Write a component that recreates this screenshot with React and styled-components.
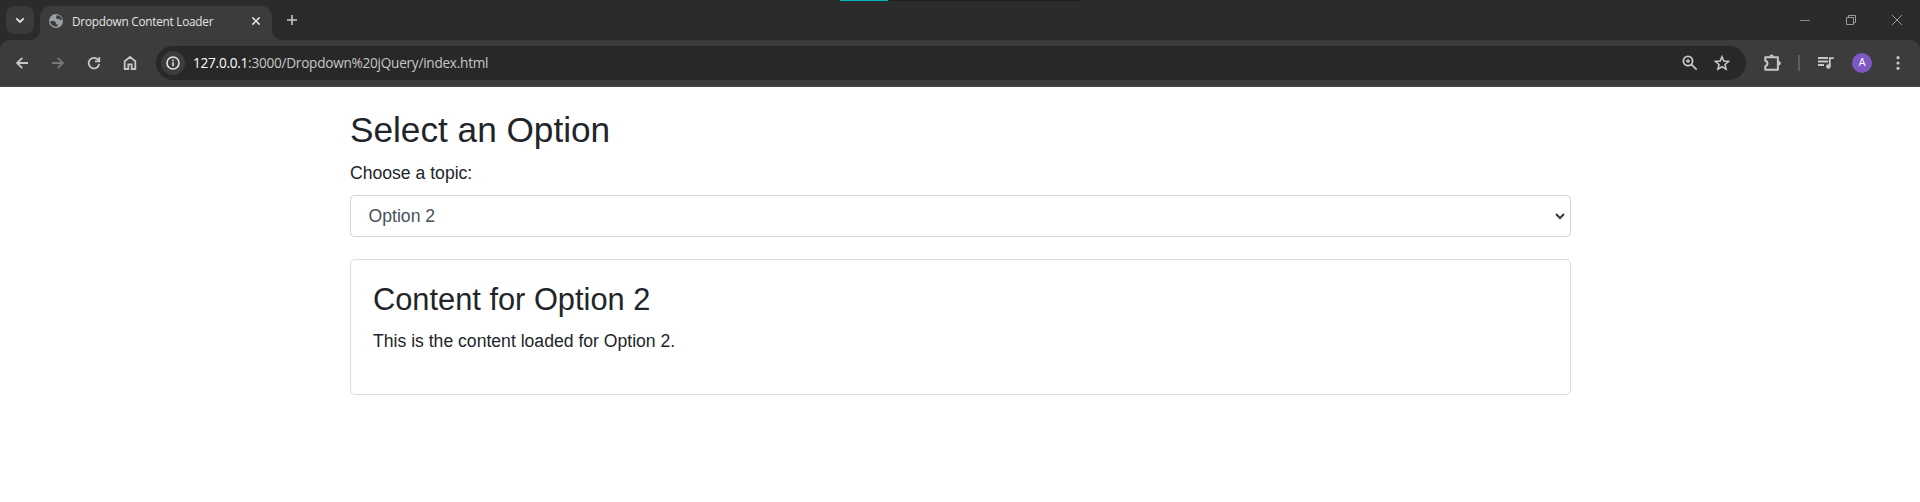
import React from "react";
import styled, { createGlobalStyle } from "styled-components";

const GlobalStyle = createGlobalStyle`
  *, *::before, *::after { box-sizing: border-box; }
  body {
    margin: 0;
    background: #fff;
    color: #212529;
    font-family: Arial, "Liberation Sans", sans-serif;
    font-size: 17.6px;
    line-height: 1.5;
  }
`;

const Browser = styled.header`
  height: 87px;
  background: #2b2b2b;
  font-family: "Segoe UI", "Open Sans", sans-serif;
`;

const LoadingTrack = styled.div`
  position: absolute;
  top: 0;
  left: 840px;
  width: 241px;
  height: 1px;
  background: #1e1e1e;
`;

const LoadingBar = styled.div`
  width: 48px;
  height: 1px;
  background: #00b7c3;
`;

const TabStrip = styled.div`
  display: flex;
  align-items: flex-start;
  height: 40px;
  padding: 6px 0 0 6px;
`;

const TabSearch = styled.div`
  display: flex;
  width: 28px;
  height: 28px;
  border-radius: 9px;
  background: #3a3c3b;
`;

const Tab = styled.div`
  position: relative;
  display: flex;
  align-items: center;
  width: 232px;
  height: 34px;
  margin-left: 6px;
  padding: 0 6px 5px 8px;
  border-radius: 10px 10px 0 0;
  background: #3c3c3c;

  &::before, &::after {
    content: "";
    position: absolute;
    bottom: 0;
    width: 10px;
    height: 10px;
  }
  &::before {
    left: -10px;
    background: radial-gradient(circle at 0 0, transparent 9.5px, #3c3c3c 10.5px);
  }
  &::after {
    right: -10px;
    background: radial-gradient(circle at 100% 0, transparent 9.5px, #3c3c3c 10.5px);
  }
`;

const TabTitle = styled.span`
  flex: 1;
  margin-left: 8px;
  color: #e3e3e3;
  font-size: 11.8px;
  line-height: 16px;
  letter-spacing: -0.25px;
  white-space: nowrap;
`;

const NewTab = styled.div`
  display: flex;
  margin-left: 6px;
`;

const WindowControls = styled.div`
  display: flex;
  margin-left: auto;
`;

const ControlCell = styled.div`
  display: flex;
  width: 46px;
  height: 28px;
`;

const Toolbar = styled.div`
  display: flex;
  align-items: center;
  height: 47px;
  padding: 0 4px;
  border-radius: 9px 9px 0 0;
  border-bottom: 1px solid #4a4a4a;
  background: #3c3c3c;
`;

const ToolButton = styled.div`
  display: flex;
  flex: none;
  width: ${(p) => p.$width || 36}px;
  height: 34px;
`;

const AddressBar = styled.div`
  display: flex;
  align-items: center;
  flex: none;
  width: 1590px;
  height: 34px;
  margin-left: 8px;
  padding: 0 8px 0 5px;
  border-radius: 17px;
  background: #282828;
`;

const SiteInfo = styled.div`
  display: flex;
  width: 24px;
  height: 24px;
  border-radius: 50%;
  background: #3c3c3c;
`;

const Url = styled.span`
  flex: 1;
  margin-left: 8px;
  color: #c7c7c7;
  font-size: 13.6px;
  line-height: 20px;
  letter-spacing: -0.25px;
  white-space: nowrap;
`;

const Host = styled.span`
  color: #fff;
`;

const Divider = styled.div`
  flex: none;
  width: 2px;
  height: 16px;
  margin-right: 8px;
  background: #5e5e5e;
`;

const Avatar = styled.div`
  width: 20px;
  height: 20px;
  margin: auto;
  border-radius: 50%;
  background: #7e57c2;
  color: #fff;
  font: 11px/20px Roboto, sans-serif;
  text-align: center;
`;

const Glyph = styled.svg`
  display: block;
  flex: none;
  margin: ${(p) => (p.$inline ? "0" : "auto")};
  fill: none;
  stroke: ${(p) => p.$color || "#c7c7c7"};
  stroke-width: ${(p) => p.$weight || 1.8};
`;

const Icon = ({ size = 16, children, ...rest }) => (
  <Glyph width={size} height={size} viewBox={`0 0 ${size} ${size}`} {...rest}>
    {children}
  </Glyph>
);

const Container = styled.main`
  width: 1254px;
  margin: 22px auto 0;
  padding: 0 16px 0 17px;
`;

const PageTitle = styled.h2`
  margin: 0 0 8.8px;
  font-size: 35.2px;
  font-weight: 500;
  line-height: 1.2;
`;

const Label = styled.label`
  display: block;
  margin-bottom: 8.8px;
`;

const SelectBox = styled.div`
  display: flex;
  align-items: center;
  justify-content: space-between;
  height: 41.8px;
  padding: 0 5px 0 17.6px;
  border: 1px solid #ced4da;
  border-radius: 4.4px;
  color: #495057;
`;

const Card = styled.section`
  margin-top: 22px;
  padding: 22px;
  border: 1px solid #dcdcdc;
  border-radius: 5px;
`;

const CardTitle = styled.h3`
  margin: 0 0 8.8px;
  font-size: 30.8px;
  font-weight: 500;
  line-height: 1.2;
`;

const CardText = styled.p`
  margin: 0 0 17.6px;
`;

export default function App() {
  return (
    <>
      <GlobalStyle />
      <Browser>
        <LoadingTrack><LoadingBar /></LoadingTrack>
        <TabStrip>
          <TabSearch>
            <Icon $color="#e3e3e3"><path d="M4.3 6.3 8 10l3.7-3.7" /></Icon>
          </TabSearch>
          <Tab>
            <Icon $inline>
              <circle cx="8" cy="8" r="7" fill="#9aa0a6" stroke="none" />
              <path
                d="M8.6 2.2c2.9 0 5.2 2 5.5 4.9H12L10.8 5.6 9.3 6.3 8.1 5.2ZM2.3 8.1h4l1.7 1.8v1.4h1.6v2.1c-3.7.9-7.3-1.5-7.3-5.3Z"
                fill="#3c3c3c"
                stroke="none"
              />
            </Icon>
            <TabTitle>Dropdown Content Loader</TabTitle>
            <Icon size={20} $color="#e3e3e3" $weight={1.5}><path d="m6.4 6.4 7.2 7.2m0-7.2-7.2 7.2" /></Icon>
          </Tab>
          <NewTab>
            <Icon size={28} $weight={1.6}><path d="M14 9v10M9 14h10" /></Icon>
          </NewTab>
          <WindowControls>
            <ControlCell>
              <Icon $color="#888" $weight={1}><path d="M3 8.5h10" /></Icon>
            </ControlCell>
            <ControlCell>
              <Icon $color="#999" $weight={1}><path d="M3.5 5.5h7v7h-7zM5.5 5.5v-2h7v7h-2" /></Icon>
            </ControlCell>
            <ControlCell>
              <Icon $color="#999" $weight={1}><path d="m3 3 10 10m0-10L3 13" /></Icon>
            </ControlCell>
          </WindowControls>
        </TabStrip>
        <Toolbar>
          <ToolButton><Icon><path d="M14 8H3.4M8.3 2.8 3.1 8l5.2 5.2" /></Icon></ToolButton>
          <ToolButton><Icon $color="#777"><path d="M2 8h10.6M7.7 2.8 12.9 8l-5.2 5.2" /></Icon></ToolButton>
          <ToolButton>
            <Icon>
              <path d="M13.2 8.8A5.3 5.3 0 1 1 12 4.7l1 1.2" />
              <path d="M13.3 2v4.4H9" />
            </Icon>
          </ToolButton>
          <ToolButton>
            <Icon><path d="M2.7 14V6.2L8 2l5.3 4.2V14H9.7V9.4H6.3V14Z" /></Icon>
          </ToolButton>
          <AddressBar>
            <SiteInfo>
              <Icon $color="#e3e3e3" $weight={1.6}>
                <circle cx="8" cy="8" r="6" />
                <path d="M8 7.2v4M8 4.6v1.6" />
              </Icon>
            </SiteInfo>
            <Url><Host>127.0.0.1</Host>:3000/Dropdown%20jQuery/index.html</Url>
            <ToolButton $width={32}>
              <Icon>
                <circle cx="6" cy="6" r="4.6" />
                <path d="m9.3 9.3 5.4 5.4" />
                <path d="M6 4v4M4 6h4" strokeWidth="1.4" />
              </Icon>
            </ToolButton>
            <ToolButton $width={32}>
              <Icon $weight={1.6}>
                <path d="m8 1.8 1.8 4.3 4.8.4L11 9.5l1.1 4.6L8 11.7l-4.1 2.4L5 9.5 1.4 6.5l4.8-.4Z" />
              </Icon>
            </ToolButton>
          </AddressBar>
          <ToolButton $width={52}>
            <Icon size={20} $weight={2}>
              <path d="M3.3 4.2h12.6v12.6H3.3v-3.6c2.9-.9 2.9-4.5 0-5.4Z" strokeLinejoin="round" />
              <path d="M7.4 3.6a2.2 2.2 0 0 1 4.4 0ZM16.6 8.1a2.2 2.2 0 0 1 0 4.4Z" fill="#c7c7c7" stroke="none" />
            </Icon>
          </ToolButton>
          <Divider />
          <ToolButton>
            <Icon size={18}>
              <path d="M1 4h10M1 7.5h10M1 11h6" />
              <path d="M12.8 12.5V4.1h4" />
              <circle cx="11.4" cy="12.5" r="2.3" fill="#c7c7c7" stroke="none" />
            </Icon>
          </ToolButton>
          <ToolButton><Avatar>A</Avatar></ToolButton>
          <ToolButton>
            <Icon>
              <g fill="#c7c7c7" stroke="none">
                <circle cx="8" cy="2.7" r="1.6" />
                <circle cx="8" cy="8" r="1.6" />
                <circle cx="8" cy="13.3" r="1.6" />
              </g>
            </Icon>
          </ToolButton>
        </Toolbar>
      </Browser>
      <Container>
        <PageTitle>Select an Option</PageTitle>
        <Label>Choose a topic:</Label>
        <SelectBox>
          Option 2
          <Icon size={10} $color="#343a40" $weight={2} $inline><path d="m1 3 4 4 4-4" /></Icon>
        </SelectBox>
        <Card>
          <CardTitle>Content for Option 2</CardTitle>
          <CardText>This is the content loaded for Option 2.</CardText>
        </Card>
      </Container>
    </>
  );
}
